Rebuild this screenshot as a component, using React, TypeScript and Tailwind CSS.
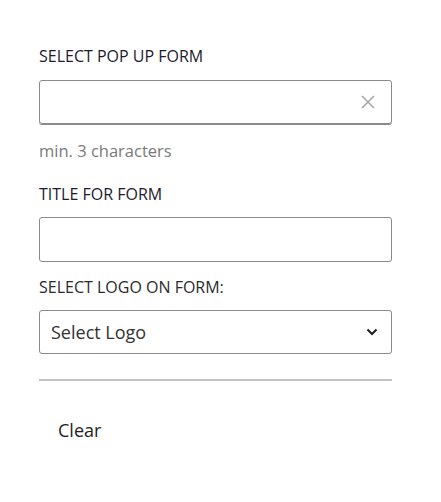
import React from "react";

export default function App() {
  const font = { fontFamily: '"Open Sans", "Noto Sans", sans-serif' };
  return (
    <div className="w-[441px] h-[502px] bg-white overflow-hidden" style={font}>
      <div className="pl-[39px] pt-[45px] w-[392px]">
        <div className="text-[16px] leading-[22px] text-[#231a2e] uppercase">Select pop up form</div>
        <div className="mt-[13px] h-[44px] border border-[#8a8a8a] rounded-[3px] shadow-[0_1px_0_#8a8a8a] flex items-center justify-end pr-[15px]">
          <svg width="16" height="16" viewBox="0 0 16 16" fill="none" stroke="#a8a8a8" strokeWidth="1.6">
            <path d="M2 2 L14 14 M14 2 L2 14" />
          </svg>
        </div>
        <div className="mt-[16px] text-[16.5px] leading-[22px] text-[#7a7a7a]">min. 3 characters</div>
        <div className="mt-[21px] text-[16px] leading-[22px] text-[#231a2e] uppercase">Title for form</div>
        <div className="mt-[12px] h-[45px] border border-[#8a8a8a] rounded-[3px]" />
        <div className="mt-[14px] text-[16px] leading-[22px] text-[#2a2a2a] uppercase">Select logo on form:</div>
        <div className="mt-[12px] h-[44px] border border-[#8a8a8a] rounded-[3px] flex items-center justify-between pl-[11px] pr-[13px]">
          <span className="text-[18px] text-[#333]">Select Logo</span>
          <svg width="12" height="8" viewBox="0 0 12 8" fill="none" stroke="#1e1e1e" strokeWidth="2">
            <path d="M1.5 1.5 L6 6 L10.5 1.5" />
          </svg>
        </div>
        <div className="mt-[25px] h-[2px] bg-[#c3c0c7]" />
        <div className="mt-[36px] pl-[19px] text-[18px] leading-[26px] text-[#1e1e1e]">Clear</div>
      </div>
    </div>
  );
}
